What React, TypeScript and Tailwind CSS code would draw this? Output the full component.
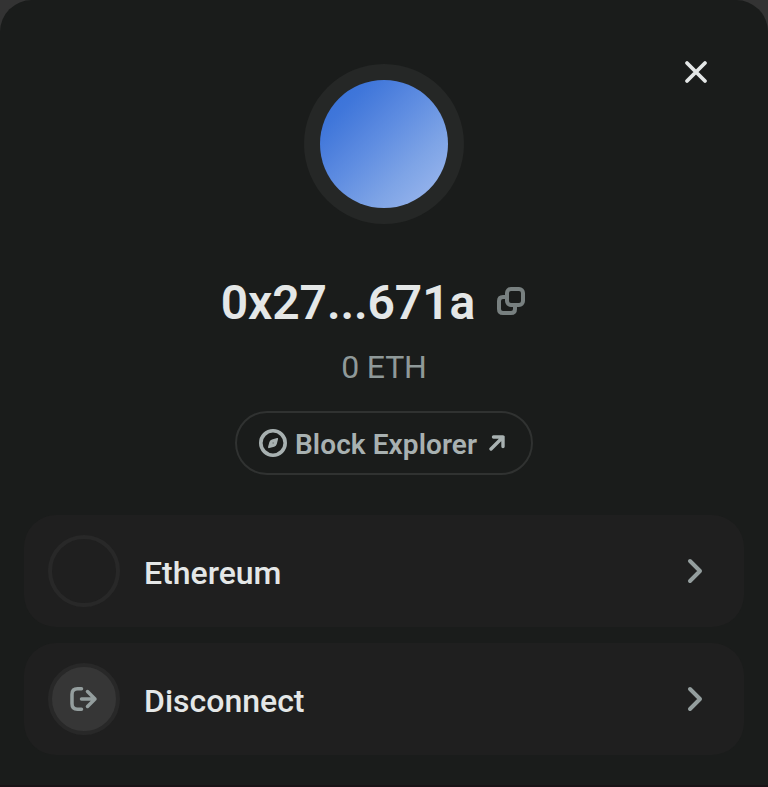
import type { ReactNode } from "react";

function Chevron() {
  return (
    <svg className="h-7 w-5" viewBox="0 0 20 28" fill="none" stroke="#949e9e" strokeWidth="4" strokeLinecap="round" strokeLinejoin="round">
      <path d="M5 4 L15 14 L5 24" />
    </svg>
  );
}

function ListItem({ label, icon, filled }: { label: string; icon?: ReactNode; filled?: boolean }) {
  return (
    <button className="flex h-28 w-full items-center rounded-[32px] bg-[#1f1f1f] pr-[39px] pl-6">
      <span className={`flex size-[72px] shrink-0 items-center justify-center rounded-full border-4 border-[#282828] ${filled ? "bg-[#363636]" : ""}`}>
        {icon}
      </span>
      <span className="mt-1 ml-6 flex-1 text-left text-[32px] leading-10 font-medium text-[#e4e7e7]">{label}</span>
      <Chevron />
    </button>
  );
}

export default function App() {
  return (
    <div className="h-[787px] w-[768px] overflow-hidden bg-[#333333] font-['Roboto',sans-serif]">
      <div className="relative flex h-[785px] flex-col items-center rounded-t-[32px] bg-[#1a1c1b] px-6 pt-16">
        <button aria-label="Close" className="absolute top-14 right-14">
          <svg className="size-8" viewBox="0 0 32 32" fill="none" stroke="#e4e7e7" strokeWidth="3.8" strokeLinecap="round">
            <path d="M7 7 L25 25 M25 7 L7 25" />
          </svg>
        </button>
        <div className="flex size-40 shrink-0 items-center justify-center rounded-full bg-[#252726]">
          <div className="size-32 rounded-full bg-[linear-gradient(135deg,#346fd8_0%,#3f76da_20%,#4f81dd_33%,#5f8de1_46%,#7ea4e6_70%,#a2bbef_100%)]" />
        </div>
        <div className="mt-[51px] flex h-14 items-center gap-[22px] pr-[22px]">
          <h1 className="text-[48px] leading-[56px] font-semibold tracking-[-0.1px] whitespace-nowrap text-[#e4e7e7]">0x27...671a</h1>
          <svg className="mb-1 size-7 shrink-0" viewBox="0 0 28 28" fill="none" stroke="#788080" strokeWidth="4" strokeLinejoin="round">
            <rect x="10" y="2" width="16" height="16" rx="4" />
            <path d="M10 10 H6 Q2 10 2 14 V22 Q2 26 6 26 H14 Q18 26 18 22 V18" />
          </svg>
        </div>
        <p className="mt-4 text-[32px] leading-10 font-normal tracking-[-0.2px] text-[#8f9999]">0 ETH</p>
        <button className="mt-6 flex h-16 w-[298px] items-center rounded-full border-2 border-[#303231] pl-[22px] text-[#a8b1b1]">
          <svg className="size-7 shrink-0" viewBox="0 0 28 28" fill="none">
            <circle cx="14" cy="14" r="12.2" stroke="currentColor" strokeWidth="3.6" />
            <path d="M18 9 Q19.5 8.7 19 10.2 L17.8 15 Q17.2 17 15.2 17.7 L10.3 19.1 Q8.7 19.4 9.1 17.8 L10.4 13 Q10.9 11.1 13 10.4 Z" fill="currentColor" />
            <circle cx="14.2" cy="14" r="0.9" fill="#1a1c1b" opacity=".25" />
          </svg>
          <span className="mt-1 ml-2 text-[28px] leading-8 font-semibold tracking-[0.08px] whitespace-nowrap">Block Explorer</span>
          <svg className="ml-3 size-4 shrink-0" viewBox="0 0 16 16" fill="none" stroke="currentColor" strokeWidth="3.4" strokeLinecap="round" strokeLinejoin="round">
            <path d="M2 14 L14 2 M4.5 2 H14 V11.5" />
          </svg>
        </button>
        <div className="mt-10 flex w-full flex-col gap-4">
          <ListItem label="Ethereum" />
          <ListItem
            label="Disconnect"
            filled
            icon={
              <svg className="h-6 w-7" viewBox="0 0 28 24" fill="none" stroke="#949e9e" strokeWidth="3.5" strokeLinecap="round" strokeLinejoin="round">
                <path d="M11.5 1.8 H7.5 Q2 1.8 2 7.3 V16.7 Q2 22.2 7.5 22.2 H11.5 M11.5 12 H25 M17.5 4.6 L25 12 L17.5 19.4" />
              </svg>
            }
          />
        </div>
      </div>
      <div className="h-0.5 bg-[#191316]" />
    </div>
  );
}
